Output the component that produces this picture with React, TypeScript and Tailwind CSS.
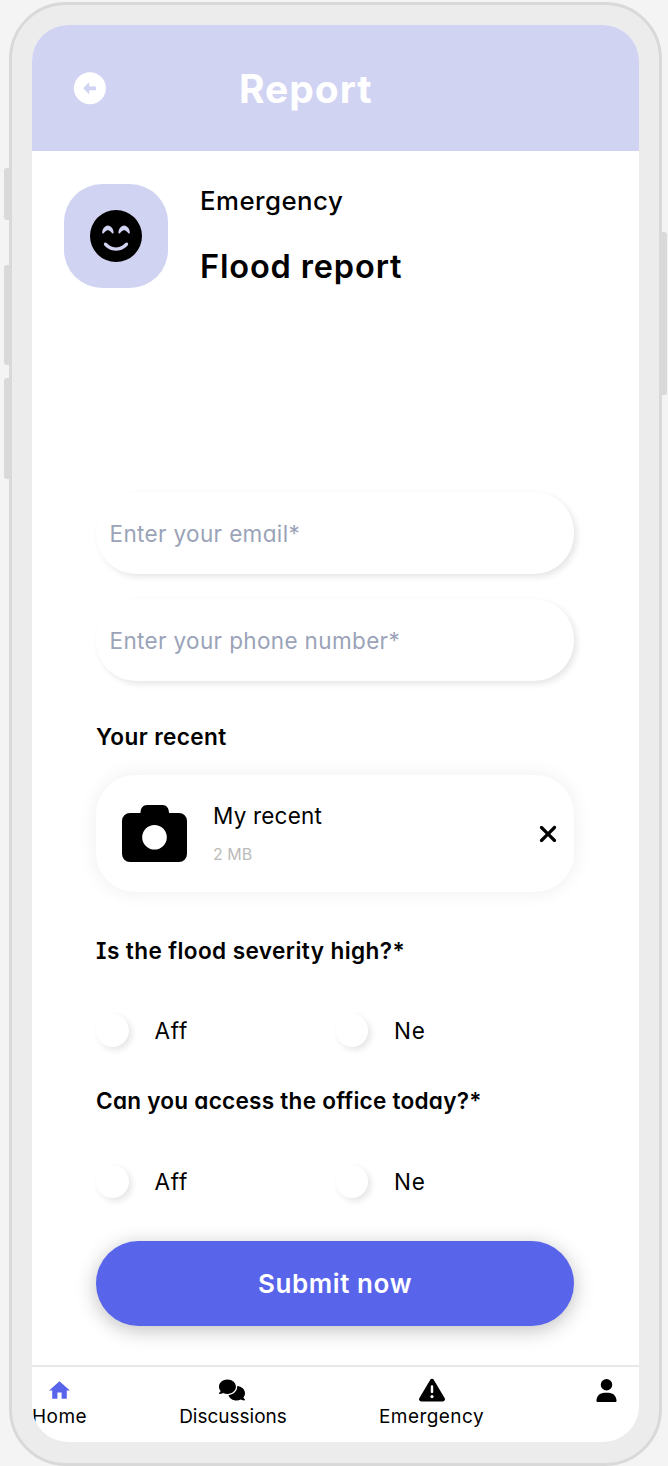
import React from "react";
import { FaComments, FaUser, FaXmark, FaTriangleExclamation, FaFaceSmileBeam } from "react-icons/fa6";
import { MdHome } from "react-icons/md";

function BackIcon() {
  return (
    <svg viewBox="0 0 33 33" className="h-[33px] w-[33px]">
      <circle cx="16.9" cy="16.3" r="16" fill="#fff" />
      <path d="M10.3 16.3 L16.2 10.1 V14.4 H23 V18.2 H16.2 V22.5 Z" fill="#d1d3f2" />
    </svg>
  );
}

function CameraIcon() {
  return (
    <svg viewBox="0 0 65 57" className="h-[57px] w-[65px] shrink-0">
      <path
        fillRule="evenodd"
        d="M8 8 H18.5 C18.5 3 21 0 25 0 H40.5 C44.5 0 47 3 47 8 H57 A8 8 0 0 1 65 16 V49 A8 8 0 0 1 57 57 H8 A8 8 0 0 1 0 49 V16 A8 8 0 0 1 8 8 Z M32.5 20 A12.3 12.3 0 1 0 32.5 44.6 A12.3 12.3 0 1 0 32.5 20 Z"
      />
    </svg>
  );
}

function Field({ label, type }: { label: string; type: string }) {
  return (
    <input
      type={type}
      placeholder={label}
      className="block h-[82px] w-full rounded-[40px] bg-white pl-[13.5px] pr-[13px] text-[22.5px] tracking-[0.36px] shadow-[3px_3px_6px_rgba(0,0,0,0.1)] outline-none placeholder:text-[#9aa3b8]"
    />
  );
}

function Choice({ label }: { label: string }) {
  return (
    <label className="flex w-[240px] items-center gap-[26px]">
      <span className="h-[32.5px] w-[32.5px] rounded-full bg-white shadow-[3px_3px_6px_rgba(0,0,0,0.1)]" />
      <span className="pt-px text-[22.5px] leading-[32px] tracking-[0.8px]">{label}</span>
    </label>
  );
}

function Choices() {
  return (
    <div className="flex h-[33px] gap-px">
      <Choice label="Aff" />
      <Choice label="Ne" />
    </div>
  );
}

export default function App() {
  return (
    <div className="h-[1466px] w-[668px] overflow-hidden bg-[#f4f4f4] pl-[9px] pt-[2px] text-black [font-family:Inter,'Liberation_Sans',sans-serif] [font-feature-settings:'cv11','cv08','calt'_0]">
      <div className="relative h-[1464px] w-[653px] rounded-[57px] border-[3px] border-[#d9d9d9] bg-[#ececec] px-5 pt-5">
        <span className="absolute -left-2 top-[163px] h-[52px] w-[5px] rounded-l-[3px] bg-[#d9d9d9]" />
        <span className="absolute -left-2 top-[260px] h-[100px] w-[5px] rounded-l-[3px] bg-[#d9d9d9]" />
        <span className="absolute -left-2 top-[373px] h-[101px] w-[5px] rounded-l-[3px] bg-[#d9d9d9]" />
        <span className="absolute -right-2 top-[227px] h-[163px] w-[5px] rounded-r-[3px] bg-[#d9d9d9]" />

        <div className="flex h-[1417px] flex-col overflow-hidden rounded-[36px] bg-white">
          <header className="flex h-[126px] shrink-0 items-center bg-[#d1d3f2] pl-[41px]">
            <BackIcon />
            <h1 className="ml-[133px] pt-[2px] text-[39px] font-bold leading-[44px] tracking-[0.95px] text-white">Report</h1>
          </header>

          <section className="mt-[33px] flex h-[104px] shrink-0 gap-[33px] pl-8">
            <div className="flex h-[104px] w-[104px] items-center justify-center rounded-[38px] bg-[#d1d3f2]">
              <FaFaceSmileBeam className="h-[52px] w-[52px]" />
            </div>
            <div className="-ml-px flex flex-col">
              <p className="mt-[1px] text-[25.8px] font-medium leading-[32px] tracking-[0.48px]">Emergency</p>
              <h2 className="mt-[30px] text-[32.5px] font-semibold leading-[40px] tracking-[0.85px]">Flood report</h2>
            </div>
          </section>

          <form className="mt-[204px] flex w-[542px] shrink-0 flex-col pl-16">
            <Field label="Enter your email*" type="email" />
            <div className="h-[25px]" />
            <Field label="Enter your phone number*" type="tel" />

            <h3 className="mt-[40px] text-[22.6px] font-semibold leading-[32px] tracking-[0.4px]">Your recent</h3>
            <div className="mt-[22px] flex h-[117px] items-center rounded-[39px] bg-white pl-[26px] pr-[13px] shadow-[0_0_20px_rgba(0,0,0,0.07)]">
              <CameraIcon />
              <div className="-mt-[2px] ml-[26px] flex-1">
                <p className="text-[22.5px] leading-[32px] tracking-[0.2px]">My recent</p>
                <p className="mt-[10px] text-[16px] leading-[24px] text-[#bbbbbb]">2 MB</p>
              </div>
              <FaXmark className="h-[26px] w-[26px]" />
            </div>

            <h3 className="mt-[43px] text-[22.6px] font-semibold leading-[32px] tracking-[0.4px]">Is the flood severity high?*</h3>
            <div className="mt-[47px]">
              <Choices />
            </div>
            <h3 className="mt-[38px] text-[22.6px] font-semibold leading-[32px] tracking-[0.24px]">Can you access the office today?*</h3>
            <div className="mt-[48px]">
              <Choices />
            </div>
            <button
              type="button"
              className="mt-[43px] h-[85px] w-full rounded-full bg-[#5865eb] text-[26px] font-semibold tracking-[0.6px] text-white shadow-[0_4px_20px_rgba(0,0,0,0.25)]"
            >
              Submit now
            </button>
          </form>

          <nav className="mt-auto flex h-[77px] shrink-0 items-start border-t-2 border-[#e8e8e8] pt-[9px] text-[19px]">
            <a className="flex w-[55px] flex-col items-center">
              <span className="flex h-7 items-center"><MdHome className="h-[25px] w-[25px] text-[#5865eb]" /></span>
              <span className="pt-px leading-6 tracking-[0.4px]">Home</span>
            </a>
            <a className="ml-[92px] flex w-[108px] flex-col items-center">
              <span className="flex h-7 items-center"><FaComments className="-ml-[2px] h-[24px] w-[26px]" /></span>
              <span className="pt-px leading-6">Discussions</span>
            </a>
            <a className="ml-[91px] flex w-[107px] flex-col items-center">
              <span className="flex h-7 items-center"><FaTriangleExclamation className="h-[26px] w-[26px]" /></span>
              <span className="pt-px leading-6 tracking-[0.45px]">Emergency</span>
            </a>
            <a className="ml-[110px] flex h-7 w-[22px] items-center justify-center">
              <FaUser className="h-[23px] w-[21px]" />
            </a>
          </nav>
        </div>
      </div>
    </div>
  );
}
